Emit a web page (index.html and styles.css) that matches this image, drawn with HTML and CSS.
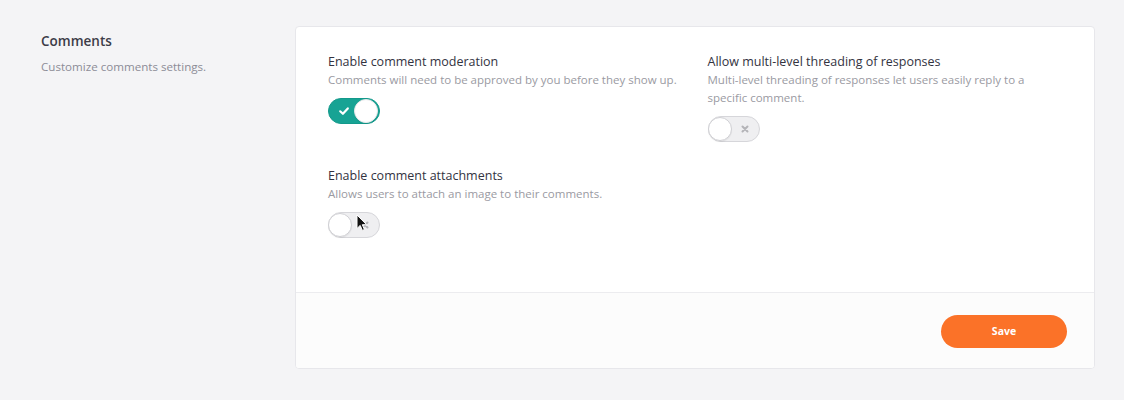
FILE: index.html
```html
<!DOCTYPE html>
<html>
<head>
<meta charset="utf-8">
<link rel="stylesheet" href="styles.css">
</head>
<body>
<div class="page">
  <aside class="intro">
    <h2 class="intro-title">Comments</h2>
    <p class="intro-text">Customize comments settings.</p>
  </aside>
  <section class="card">
    <div class="card-body">
      <div class="setting">
        <h3 class="setting-title">Enable comment moderation</h3>
        <p class="setting-text">Comments will need to be approved by you before they show up.</p>
        <span class="toggle on">
          <svg class="icon-check" viewBox="0 0 12 12" width="12" height="12"><path d="M2.2 6.3 L4.9 8.8 L9.8 3.4" fill="none" stroke="#fff" stroke-width="2.2" stroke-linecap="round" stroke-linejoin="round"/></svg>
          <span class="knob"></span>
        </span>
      </div>
      <div class="setting">
        <h3 class="setting-title">Allow multi-level threading of responses</h3>
        <p class="setting-text">Multi-level threading of responses let users easily reply to a specific comment.</p>
        <span class="toggle off">
          <span class="knob"></span>
          <svg class="icon-x" viewBox="0 0 10 10" width="10" height="10"><path d="M2.5 2.5 L7.5 7.5 M7.5 2.5 L2.5 7.5" fill="none" stroke="#b4b4b8" stroke-width="2" stroke-linecap="round"/></svg>
        </span>
      </div>
      <div class="setting">
        <h3 class="setting-title">Enable comment attachments</h3>
        <p class="setting-text">Allows users to attach an image to their comments.</p>
        <span class="toggle off with-cursor">
          <span class="knob"></span>
          <svg class="icon-x" viewBox="0 0 10 10" width="10" height="10"><path d="M2.5 2.5 L7.5 7.5 M7.5 2.5 L2.5 7.5" fill="none" stroke="#b4b4b8" stroke-width="2" stroke-linecap="round"/></svg>
          <svg class="cursor" viewBox="0 0 12 18" width="12" height="18"><path d="M1 1 L1 14.5 L4.2 11.4 L6.4 16.4 L8.4 15.5 L6.3 10.7 L10.6 10.7 Z" fill="#111" stroke="#fff" stroke-width="1"/></svg>
        </span>
      </div>
    </div>
    <div class="card-footer">
      <button class="btn-save">Save</button>
    </div>
  </section>
</div>
</body>
</html>
```
FILE: styles.css
```css
html, body {
  margin: 0;
  padding: 0;
  background: #f4f4f6;
  font-family: "Open Sans", "Noto Sans", sans-serif;
}
.page {
  display: flex;
  padding: 26px 0 0 41px;
}
.intro {
  width: 254px;
  flex: none;
  padding-top: 6px;
}
.intro-title {
  margin: 0;
  font-size: 13.5px;
  font-weight: 600;
  color: #3c3c48;
  line-height: 18px;
}
.intro-text {
  margin: 9px 0 0;
  font-size: 11.6px;
  color: #8c8c96;
  line-height: 16px;
}
.card {
  width: 798px;
  background: #fff;
  border: 1px solid #e7e7eb;
  border-radius: 4px;
  overflow: hidden;
}
.card-body {
  display: grid;
  grid-template-columns: 1fr 1fr;
  column-gap: 25px;
  row-gap: 25px;
  padding: 26px 32px 54px;
}
.setting-title {
  margin: 0;
  font-size: 12.5px;
  font-weight: 500;
  color: #33333f;
  line-height: 18px;
}
.setting-text {
  margin: 0;
  font-size: 11.5px;
  color: #9a9aa2;
  line-height: 18px;
}
.toggle {
  position: relative;
  display: flex;
  align-items: center;
  width: 52px;
  height: 26px;
  box-sizing: border-box;
  border-radius: 13px;
  margin-top: 9px;
}
.toggle.on {
  background: #17a394;
  border: 1px solid #13998b;
  justify-content: space-between;
  padding: 0 1px 0 9px;
}
.toggle.off {
  background: #efeff1;
  border: 1px solid #d6d6da;
  padding: 0 9px 0 0;
  justify-content: space-between;
}
.knob {
  width: 24px;
  height: 24px;
  border-radius: 50%;
  background: #fff;
  box-sizing: border-box;
  border: 1px solid #d0d0d4;
  box-shadow: 0 1px 1px rgba(0,0,0,0.06);
}
.toggle.on .knob {
  border-color: #e8e8ea;
}
.toggle.off .knob {
  margin-left: -1px;
}
.cursor {
  position: absolute;
  left: 27px;
  top: 1px;
}
.card-footer {
  border-top: 1px solid #ececef;
  background: #fcfcfc;
  height: 75px;
  display: flex;
  align-items: center;
  justify-content: flex-end;
  padding: 0 27px;
}
.btn-save {
  width: 126px;
  height: 33px;
  border: none;
  border-radius: 17px;
  background: #fb7228;
  color: #fff;
  font-family: "Open Sans", sans-serif;
  font-weight: 700;
  font-size: 10.5px;
  margin-top: 1px;
}
```
